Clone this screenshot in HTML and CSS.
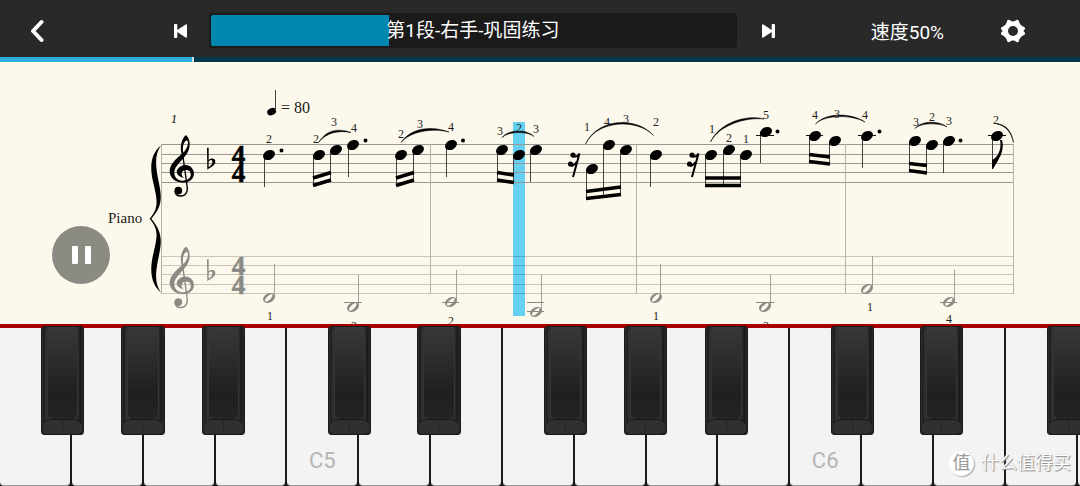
FILE: index.html
```
<!DOCTYPE html>
<html lang="zh-CN">
<head>
    <meta charset="utf-8">
    <meta name="viewport" content="width=device-width, initial-scale=1">
    <title>第1段-右手-巩固练习</title>
    <link rel="stylesheet" href="styles.css">
</head>
<body>
    <header class="toolbar">
        <button class="icon-btn back" aria-label="返回">
            <svg width="14" height="24" viewBox="0 0 14 24"><path d="M11.500 3 3 12l8.500 9" fill="none" stroke="#fff" stroke-width="4" stroke-linecap="round" stroke-linejoin="round"/></svg>
        </button>
        <button class="icon-btn prev" aria-label="上一段">
            <svg width="13" height="14" viewBox="0 0 13 14"><path d="M0 .5 1 0h1.500l.8.500V6L12 .2l1 .5v12.600l-1 .5L3.300 8v5.500l-.8.500H1l-1-.5z" fill="#fff"/></svg>
        </button>
        <div class="section">
            <div class="section-fill" style="width: 34%"></div>
            <span class="section-name">第1段-右手-巩固练习</span>
        </div>
        <button class="icon-btn next" aria-label="下一段">
            <svg width="13" height="14" viewBox="0 0 13 14"><path d="M13 .5 12 0h-1.500l-.8.500V6L1 .2 0 .7v12.600l1 .5L9.700 8v5.500l.8.500H12l1-.5z" fill="#fff"/></svg>
        </button>
        <button class="icon-btn speed">速度50%</button>
        <button class="icon-btn settings" aria-label="设置">
            <svg width="26" height="26" viewBox="0 0 26 26"><path d="M8.600 3.300 Q13 6.600 17.400 3.300 Q18.500 8.500 23.500 10.500 Q20.500 13 23.500 15.500 Q18.500 17.500 17.400 22.700 Q13 19.400 8.600 22.700 Q7.500 17.500 2.500 15.500 Q5.500 13 2.500 10.500 Q7.500 8.500 8.600 3.300Z" fill="#fff" stroke="#fff" stroke-width="3" stroke-linejoin="round"/><circle cx="13" cy="13" r="5" fill="#292929"/></svg>
        </button>
    </header>
    <div class="song-progress">
        <div class="song-played" style="width: 18%"></div>
    </div>

    <main class="score">
        <svg class="sheet" viewBox="0 62 1080 262">
            <defs>
                <ellipse id="head" rx="6.300" ry="4.700" transform="rotate(-28)"/>
                <g id="half">
                    <path fill-rule="evenodd" transform="rotate(-28)" d="M-6.300 0a6.300 4.600 0 1 0 12.600 0a6.300 4.600 0 1 0 -12.600 0ZM-4.800 .8C-5-1 0-2.800 3-2.500C5.500-2.200 5 -.8 3 .6C0 2.400-4.600 3.200-4.800 .8Z"/>
                </g>
                <g id="clef" transform="translate(90 90) scale(.3333)">
                    <path fill-rule="evenodd" d="M275 192C269 170 274 146 288 135C297 143 300 156 299 167C297 188 283 202 268 218C258 229 252 238 253 251C255 265 266 272 279 272C296 271 304 262 302 250C300 240 291 238 283 241C273 244 272 257 282 264C267 261 257 251 261 241C266 230 277 225 286 225C302 225 312 238 312 251C311 269 295 278 278 278C257 278 239 264 239 244C239 226 254 211 265 201ZM280 188C276 170 282 152 291 151C298 158 292 176 280 188Z"/>
                    <path d="M277 185L291 287C295 307 286 318 272 318C263 318 256 312 255 304" fill="none" stroke="currentColor" stroke-width="4"/>
                    <circle cx="265" cy="302" r="11.500"/>
                </g>
                <g id="signature">
                    <path fill-rule="evenodd" transform="translate(90 90) scale(.3333)" d="M351 173h5v37C363 203 377 204 376 216C375 226 365 230 352 239ZM356 215v17C364 226 369 219 367 212C363 208 359 210 356 215Z"/>
                    <text class="meter" x="238.500" y="163.500">4</text>
                    <text class="meter" x="238.500" y="182">4</text>
                </g>
                <g id="rest">
                    <circle cx="-5" cy="-9" r="2.600"/>
                    <circle cx="-7.500" cy="0" r="2.600"/>
                    <path d="M-5-7.500C-1 -7 0-8 1.500-10.500L-5 13M-7 2C-4 2-3 0-1.500-2" fill="none" stroke="#000" stroke-width="2"/>
                </g>
            </defs>

            <!-- playback position -->
            <rect x="513" y="122" width="12" height="194" fill="#66d0f0"/>

            <!-- staves and bar lines -->
            <path class="staff" d="M161 144.500H1014M161 154.500H1014M161 163.500H1014M161 172.500H1014M161 182.500H1014"/>
            <path class="staff-low" d="M161 256.500H1014M161 265.500H1014M161 274.500H1014M161 284.500H1014M161 293.500H1014"/>
            <path class="bars" d="M161.500 144V294M430.500 144V294M636.500 144V294M845.500 144V294M1013.500 144V294"/>

            <path transform="translate(90 90) scale(.3333)" d="M213 166C195 192 196 220 203 260C216 320 220 345 184 386C220 430 216 455 203 515C196 555 195 582 213 608C179 580 181 535 188 500C202 440 208 420 179 386C208 352 202 330 188 270C181 235 179 195 213 166Z"/>
            <text class="part" x="108" y="223">Piano</text>
            <text class="measure" x="171" y="123">1</text>

            <ellipse cx="271.700" cy="111.700" rx="4.600" ry="3.500" transform="rotate(-25 271.700 111.700)"/>
            <path class="stem" d="M275.500 90V111"/>
            <text class="tempo" x="281" y="113">= 80</text>

            <g color="#000">
                <use href="#clef"/>
                <use href="#signature"/>
            </g>
            <g color="#8b8a85" fill="#8b8a85" transform="translate(0 111.500)">
                <use href="#clef"/>
                <use href="#signature"/>
            </g>

            <!-- right hand -->
            <path class="stem" d="M264.500 155V187M313.500 155V186M330.500 150V181M348.500 146V177M396.500 155V186M413.500 150V181M446.500 146V177M497.500 150V181M513.500 155V183M530.500 150V182M586.500 169V200M603.500 145V197M620.500 150V195M650.500 155V187M705.500 155V186M723.500 150V186M740.500 155V186M760.500 132V163M809.500 136V163M829.500 141V165M862.500 136V168M909.500 141V172M926.500 145V173M943.500 141V173M992.500 136V166"/>
            <path class="ledger" d="M756 135.500H774M806 135.500H823M858 135.500H876M988 135.500H1006"/>
            <use href="#head" x="269" y="155"/>
            <use href="#head" x="319" y="155"/>
            <use href="#head" x="336" y="150"/>
            <use href="#head" x="353" y="145"/>
            <use href="#head" x="401" y="155"/>
            <use href="#head" x="418" y="150"/>
            <use href="#head" x="451" y="145"/>
            <use href="#head" x="502" y="150"/>
            <use href="#head" x="519" y="155"/>
            <use href="#head" x="536" y="150"/>
            <use href="#rest" x="578" y="164"/>
            <use href="#head" x="592" y="169"/>
            <use href="#head" x="609" y="145"/>
            <use href="#head" x="626" y="150"/>
            <use href="#head" x="656" y="155"/>
            <use href="#rest" x="697" y="164"/>
            <use href="#head" x="711" y="155"/>
            <use href="#head" x="729" y="150"/>
            <use href="#head" x="746" y="155"/>
            <use href="#head" x="766" y="132"/>
            <use href="#head" x="815" y="136"/>
            <use href="#head" x="835" y="141"/>
            <use href="#head" x="867" y="136"/>
            <use href="#head" x="915" y="141"/>
            <use href="#head" x="932" y="145"/>
            <use href="#head" x="949" y="141"/>
            <use href="#head" x="997" y="136"/>
            <path class="dots" d="M281.500 150.500h0M365.500 140.500h0M463 140.500h0M777.500 131.500h0M879.500 131.500h0M960.500 140.500h0"/>
            <path class="beam" d="M313 178L331 172.500M313 185.500L331 180M396 178L414 172.500M396 185.500L414 180M497 172.500L514 175M497 180L514 182.500M586 191.500L621 187M586 198.500L621 194.500M705 178H741M705 185.500H741M809 154.500L830 157M809 161.500L830 164M909 163.500L927 165.500M909 170.500L927 173"/>
            <path d="M992 160C998 157 1002 149 1000 140L1002 140C1005 151 999 159 993 169H992Z"/>
            <path class="slur" d="M318.500 142.500C326 130.500 337 127.500 351 132.500C337 130 326 133 318.500 142.500ZM401 142.500C411 127.500 432 125.500 449 132C432 128 411 131 401 142.500ZM502 137.500C509 129 527 129 534 136.500C527 131 509 131 502 137.500ZM585.500 144C598 117 638 117 653.500 135.500C638 119 598 119 585.500 144ZM710.500 142C719 123 746 114 764 119C746 117 719 125 710.500 142ZM815.500 124C826 112 852 113 865 122C852 115 826 114 815.500 124ZM915 128.500C922 120 940 121 947 127C940 123 922 122 915 128.500ZM997 124C1006 124 1012 132 1013.500 142.500C1011 132 1006 126 997 124Z"/>

            <g class="finger">
                <text x="269" y="143">2</text>
                <text x="316" y="143">2</text>
                <text x="334" y="126">3</text>
                <text x="354" y="132">4</text>
                <text x="401" y="138">2</text>
                <text x="420" y="128">3</text>
                <text x="451" y="131">4</text>
                <text x="500" y="135">3</text>
                <text x="519" y="132">2</text>
                <text x="536" y="133">3</text>
                <text x="587" y="131">1</text>
                <text x="607" y="126">4</text>
                <text x="626" y="123">3</text>
                <text x="656" y="126">2</text>
                <text x="712" y="133">1</text>
                <text x="729" y="142">2</text>
                <text x="746" y="143">1</text>
                <text x="766" y="119">5</text>
                <text x="815" y="119">4</text>
                <text x="837" y="118">3</text>
                <text x="865" y="119">4</text>
                <text x="916" y="126">3</text>
                <text x="932" y="121">2</text>
                <text x="949" y="125">3</text>
                <text x="996" y="124">2</text>
                <text x="270" y="320">1</text>
                <text x="354" y="330">3</text>
                <text x="451" y="325">2</text>
                <text x="656" y="320">1</text>
                <text x="766" y="330">3</text>
                <text x="870" y="311">1</text>
                <text x="949" y="323">4</text>
            </g>

            <!-- left hand, muted -->
            <g fill="#8b8a85">
                <path class="stem-low" d="M274.500 264V296M358.500 275V305M456.500 270V301M541.500 275V310M660.500 264V296M770.500 275V305M872.500 256V287M954.500 270V301"/>
                <path class="ledger-low" d="M344 302.500H362M442 302.500H459M527 302.500H544M527 311.500H544M756 302.500H774M940 302.500H957"/>
                <use href="#half" x="269" y="298"/>
                <use href="#half" x="353" y="307"/>
                <use href="#half" x="451" y="302"/>
                <use href="#half" x="536" y="312"/>
                <use href="#half" x="656" y="298"/>
                <use href="#half" x="765" y="307"/>
                <use href="#half" x="867" y="289"/>
                <use href="#half" x="949" y="302"/>
            </g>
        </svg>
        <button class="pause" aria-label="暂停"><i></i><i></i></button>
    </main>

    <div class="felt"></div>
    <div class="keyboard">
        <div class="key"><button class="white" aria-label="F4"></button><button class="black low" aria-label="F#4"></button></div>
        <div class="key"><button class="white" aria-label="G4"></button><button class="black mid" aria-label="G#4"></button></div>
        <div class="key"><button class="white" aria-label="A4"></button><button class="black high" aria-label="A#4"></button></div>
        <div class="key"><button class="white" aria-label="B4"></button></div>
        <div class="key"><button class="white">C5</button><button class="black low" aria-label="C#5"></button></div>
        <div class="key"><button class="white" aria-label="D5"></button><button class="black high" aria-label="D#5"></button></div>
        <div class="key"><button class="white" aria-label="E5"></button></div>
        <div class="key"><button class="white" aria-label="F5"></button><button class="black low" aria-label="F#5"></button></div>
        <div class="key"><button class="white" aria-label="G5"></button><button class="black mid" aria-label="G#5"></button></div>
        <div class="key"><button class="white" aria-label="A5"></button><button class="black high" aria-label="A#5"></button></div>
        <div class="key"><button class="white" aria-label="B5"></button></div>
        <div class="key"><button class="white">C6</button><button class="black low" aria-label="C#6"></button></div>
        <div class="key"><button class="white" aria-label="D6"></button><button class="black high" aria-label="D#6"></button></div>
        <div class="key"><button class="white" aria-label="E6"></button></div>
        <div class="key"><button class="white" aria-label="F6"></button><button class="black low" aria-label="F#6"></button></div>
        <div class="key"><button class="white" aria-label="G6"></button></div>
        <div class="watermark"><span class="seal">值</span><span>什么值得买</span></div>
    </div>
</body>
</html>
```

FILE: styles.css
```
* {
    box-sizing: border-box;
}

body {
    margin: 0;
    min-height: 100vh;
    display: flex;
    flex-direction: column;
    background: #fcf8eb;
    font-family: Roboto, "Noto Sans CJK SC", sans-serif;
}

button {
    margin: 0;
    padding: 0;
    border: 0;
    background: none;
    font: inherit;
    color: inherit;
}

svg {
    display: block;
}

/* top bar */
.toolbar {
    display: flex;
    align-items: center;
    height: 57px;
    padding: 4px 54px 0 30px;
    background: #292929;
    color: #fff;
    font-size: 19px;
}

.icon-btn {
    flex: none;
}

.prev {
    margin-left: 130px;
}

.section {
    position: relative;
    flex: 1;
    height: 35px;
    margin: 0 25px 0 22px;
    padding: 2px;
    border-radius: 3px;
    background: #1a1a1a;
}

.section-fill {
    height: 100%;
    border-radius: 2px 0 0 2px;
    background: #0087af;
}

.section-name {
    position: absolute;
    inset: 0;
    line-height: 36px;
    text-align: center;
}

.speed {
    margin-left: 96px;
}

.settings {
    margin-left: 56px;
}

.song-progress {
    height: 5px;
    background: #03384a;
}

.song-played {
    height: 100%;
    border-right: 2px solid #d8e4e6;
    background: #2baedb;
}

/* sheet music */
.score {
    position: relative;
}

.sheet {
    width: 100%;
    font-family: "Liberation Serif", serif;
}

.staff,
.staff-low,
.bars,
.stem,
.stem-low,
.ledger,
.ledger-low,
.beam,
.dots {
    fill: none;
    stroke-width: 1;
}

.staff { stroke: #9a9891; }
.staff-low { stroke: #000; stroke-opacity: .2; }
.bars { stroke: #b5b2a9; }
.stem { stroke: #44433f; }
.stem-low { stroke: #a3a19a; }
.ledger { stroke: #111; }
.ledger-low { stroke: #8b8a85; }
.beam { stroke: #000; stroke-width: 3.5; }

.dots {
    stroke: #000;
    stroke-width: 4;
    stroke-linecap: round;
}

.slur {
    stroke: #000;
    stroke-width: .5;
}

.meter {
    font-size: 27px;
    font-weight: bold;
    text-anchor: middle;
    stroke: currentColor;
    stroke-width: .6;
}

.part { font-size: 15px; }
.tempo { font-size: 16px; }

.part,
.tempo {
    fill: #222;
}

.measure {
    font-size: 12px;
    font-style: italic;
}

.finger {
    fill: #222;
    font-size: 12px;
    text-anchor: middle;
}

.pause {
    position: absolute;
    left: 52px;
    bottom: 40px;
    width: 58px;
    height: 58px;
    display: flex;
    justify-content: center;
    align-items: center;
    gap: 7px;
    border-radius: 50%;
    background: #8b8a83;
}

.pause i {
    width: 6px;
    height: 18px;
    border-radius: 1px;
    background: #fff;
}

/* piano */
.felt {
    height: 4px;
    background: #a80000;
}

.keyboard {
    position: relative;
    flex: 1;
    display: flex;
    min-height: 158px;
    overflow-x: clip;
    background: #1a1a1a;
}

.key {
    position: relative;
    flex: 0 0 6.653%;
    display: flex;
}

.white {
    flex: 1;
    display: flex;
    justify-content: center;
    align-items: flex-end;
    margin-right: 2px;
    padding-bottom: 12px;
    border-bottom: 1px solid #999;
    border-radius: 0 0 4px 4px;
    background: #f3f3f3;
    color: #b5b5b5;
    font-size: 22px;
}

.black {
    position: absolute;
    z-index: 1;
    top: -2px;
    width: 60%;
    height: 109px;
    border: 1px solid #1a1a1a;
    border-radius: 3px;
    background: linear-gradient(90deg, #303030, #1c1c1c 5%, #303030 9%, #2b2b2b 88%, #1a1a1a 94%, #2b2b2b);
}

.black::before {
    content: "";
    position: absolute;
    inset: 0 5px 14px;
    border: 1px solid #353535;
    border-top: 0;
    border-radius: 2px 2px 6px 6px;
    background: linear-gradient(#383838, #1f1f1f 75%, #242424);
}

.black::after {
    content: "";
    position: absolute;
    inset: auto 1px 1px;
    height: 13px;
    border-top: 1px solid #1a1a1a;
    border-radius: 8px 8px 3px 3px;
    background: linear-gradient(90deg, #303030 48%, #242424 50%, #303030 52%);
}

.low { left: 57%; }
.mid { left: 69%; }
.high { left: 81%; }

.watermark {
    position: absolute;
    z-index: 2;
    right: 9px;
    bottom: 10px;
    display: flex;
    align-items: center;
    gap: 7px;
    color: #fff;
    font-size: 18px;
    line-height: 26px;
    text-shadow: 1px 1px 1px #888, 0 0 1px #bbb;
}

.seal {
    width: 25px;
    height: 25px;
    border-radius: 50%;
    background: #fff;
    box-shadow: 1px 1px 1px #aaa;
    color: #999;
    line-height: 24px;
    text-align: center;
    text-shadow: none;
}
```
